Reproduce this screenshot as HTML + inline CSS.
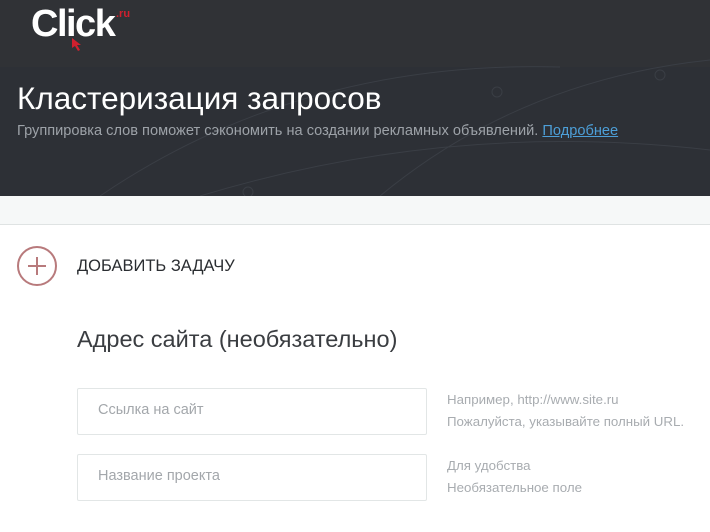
<!DOCTYPE html>
<html><head><meta charset="utf-8"><style>
*{margin:0;padding:0;box-sizing:border-box}
body{width:710px;height:532px;overflow:hidden;background:#fff;font-family:"Liberation Sans",sans-serif;position:relative}
.hdr{position:absolute;left:0;top:0;width:710px;height:196px;background:#2d3036;overflow:hidden}
.top{position:absolute;left:0;top:0;width:710px;height:67px;background:#303236}
.logo{position:absolute;left:31px;top:3px;color:#fff;font-weight:bold;font-size:38px;letter-spacing:-1.5px}
.ru{position:absolute;left:116px;top:8px;color:#d0202e;font-size:11px;font-weight:bold}
h1{position:absolute;left:17px;top:80px;color:#fff;font-weight:normal;font-size:31.5px;white-space:nowrap}
.sub{position:absolute;left:17px;top:123px;color:#9da2a8;font-size:14.6px;white-space:nowrap}
.sub a{color:#4d9fd8;text-decoration:underline}
.band{position:absolute;left:0;top:196px;width:710px;height:29px;background:#f6f8f8;border-bottom:1px solid #dfe3e3}
.plus{position:absolute;left:17px;top:246px;width:40px;height:40px;border:2px solid #b87a7c;border-radius:50%}
.plus:before{content:"";position:absolute;left:9px;top:17px;width:18px;height:2px;background:#b87a7c}
.plus:after{content:"";position:absolute;left:17px;top:9px;width:2px;height:18px;background:#b87a7c}
.add{position:absolute;left:77px;top:257px;font-size:16.5px;color:#2a2d31}
.h2{position:absolute;left:77px;top:326px;font-size:23.5px;color:#3a3d41}
.inp{position:absolute;left:77px;width:350px;height:47px;border:1px solid #e2e6e6;border-radius:2px;color:#a3a7ab;font-size:14.5px;padding:13px 20px}
.hint{position:absolute;left:447px;color:#a8acb0;font-size:13.3px;line-height:22px}
</style></head><body>
<div class="hdr">
<div class="top"></div>
<svg width="710" height="196" style="position:absolute;left:0;top:0" fill="none" stroke="#3a3e45" stroke-width="1">
<path d="M380 196 Q520 80 710 60"/><path d="M100 196 Q300 60 560 67"/><path d="M200 196 Q450 120 710 150"/>
<circle cx="497" cy="92" r="5"/><circle cx="660" cy="75" r="5"/><circle cx="248" cy="192" r="5"/>
</svg>
<div class="logo">Click</div><div class="ru">.ru</div>
<svg width="10" height="14" style="position:absolute;left:72px;top:38px"><path d="M0 0L0 10L3 8L6 13L8 12L5 7L9 7Z" fill="#d0202e"/></svg>
<h1>Кластеризация запросов</h1>
<div class="sub">Группировка слов поможет сэкономить на создании рекламных объявлений. <a>Подробнее</a></div>
</div>
<div class="band"></div>
<div class="plus"></div>
<div class="add">ДОБАВИТЬ ЗАДАЧУ</div>
<div class="h2">Адрес сайта (необязательно)</div>
<div class="inp" style="top:388px">Ссылка на сайт</div>
<div class="hint" style="top:389px">Например, http://www.site.ru<br>Пожалуйста, указывайте полный URL.</div>
<div class="inp" style="top:454px">Название проекта</div>
<div class="hint" style="top:455px">Для удобства<br>Необязательное поле</div>
</body></html>
